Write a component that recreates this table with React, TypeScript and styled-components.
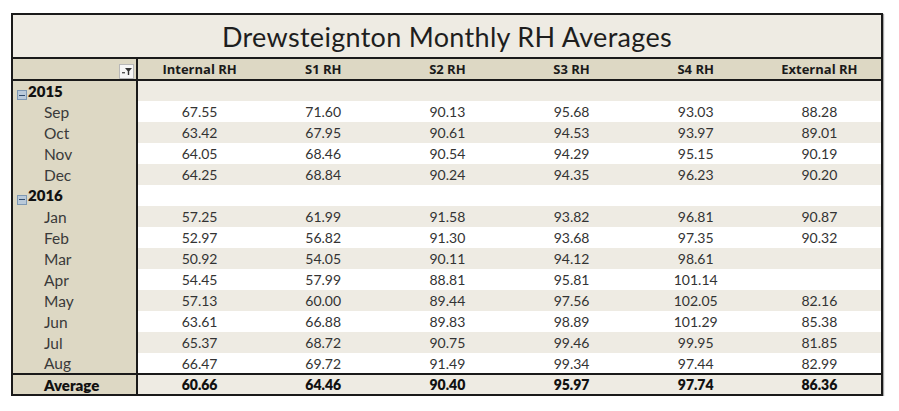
import React from 'react';
import styled, {createGlobalStyle} from "styled-components";

const GlobalStyle = createGlobalStyle`
  body {
    margin: 0;
    background: #ffffff;
    font-family: "Lato", "DejaVu Sans", sans-serif;
  }
`

type Row = { label: string; year?: boolean; values: string[] }

const rows: Row[] = [
    {label: "2015", year: true, values: ["", "", "", "", "", ""]},
    {label: "Sep", values: ["67.55", "71.60", "90.13", "95.68", "93.03", "88.28"]},
    {label: "Oct", values: ["63.42", "67.95", "90.61", "94.53", "93.97", "89.01"]},
    {label: "Nov", values: ["64.05", "68.46", "90.54", "94.29", "95.15", "90.19"]},
    {label: "Dec", values: ["64.25", "68.84", "90.24", "94.35", "96.23", "90.20"]},
    {label: "2016", year: true, values: ["", "", "", "", "", ""]},
    {label: "Jan", values: ["57.25", "61.99", "91.58", "93.82", "96.81", "90.87"]},
    {label: "Feb", values: ["52.97", "56.82", "91.30", "93.68", "97.35", "90.32"]},
    {label: "Mar", values: ["50.92", "54.05", "90.11", "94.12", "98.61", ""]},
    {label: "Apr", values: ["54.45", "57.99", "88.81", "95.81", "101.14", ""]},
    {label: "May", values: ["57.13", "60.00", "89.44", "97.56", "102.05", "82.16"]},
    {label: "Jun", values: ["63.61", "66.88", "89.83", "98.89", "101.29", "85.38"]},
    {label: "Jul", values: ["65.37", "68.72", "90.75", "99.46", "99.95", "81.85"]},
    {label: "Aug", values: ["66.47", "69.72", "91.49", "99.34", "97.44", "82.99"]},
]

const headers = ["Internal RH", "S1 RH", "S2 RH", "S3 RH", "S4 RH", "External RH"]
const averages = ["60.66", "64.46", "90.40", "95.97", "97.74", "86.36"]

export default function App() {
    return (
        <>
            <GlobalStyle/>
            <Page>
                <Table>
                    <colgroup>
                        <col style={{width: 125}}/>
                        {headers.map(h => <col key={h}/>)}
                    </colgroup>
                    <thead>
                    <tr>
                        <Title colSpan={7}>Drewsteignton Monthly RH Averages</Title>
                    </tr>
                    <tr>
                        <HeadCorner>
                            <FilterBox>
                                <svg width="12" height="10" viewBox="0 0 12 10">
                                    <path d="M4 2h7L8.2 5.2V9H6.8V5.2Z" fill="#333"/>
                                    <rect x="1" y="6" width="3" height="1.4" fill="#555"/>
                                </svg>
                            </FilterBox>
                        </HeadCorner>
                        {headers.map(h => <HeadCell key={h}>{h}</HeadCell>)}
                    </tr>
                    </thead>
                    <tbody>
                    {rows.map((r, i) => (
                        <BodyRow key={r.label} $shaded={i % 2 === 0}>
                            {r.year ? (
                                <YearLabel>
                                    <Collapse>
                                        <CollapseBar/>
                                    </Collapse>
                                    {r.label}
                                </YearLabel>
                            ) : (
                                <MonthLabel>{r.label}</MonthLabel>
                            )}
                            {r.values.map((v, j) => <Value key={j}>{v}</Value>)}
                        </BodyRow>
                    ))}
                    <AverageRow>
                        <AverageLabel>Average</AverageLabel>
                        {averages.map((v, j) => <AverageValue key={j}>{v}</AverageValue>)}
                    </AverageRow>
                    </tbody>
                </Table>
            </Page>
        </>
    );
}

const Page = styled.div`
  padding: 13px 0 0 11px;
`
const Table = styled.table`
  width: 872px;
  border-collapse: collapse;
  table-layout: fixed;
  border: 2px solid #1a1a1a;
  box-shadow: 1px 1px 1px rgba(0, 0, 0, 0.35);
  color: #2b2b2b;
`
const Title = styled.th`
  height: 42px;
  padding: 0;
  background: #eeebe3;
  font-family: "Lato", sans-serif;
  font-weight: 400;
  font-size: 27px;
  letter-spacing: 0.3px;
  color: #1e1e1e;
  text-align: center;
  border-bottom: 2px solid #1a1a1a;
`
const HeadCorner = styled.th`
  height: 20px;
  padding: 0 2px 0 0;
  background: #ddd8c4;
  text-align: right;
  border-right: 2px solid #1a1a1a;
  border-bottom: 2px solid #1a1a1a;
`
const FilterBox = styled.span`
  display: inline-flex;
  align-items: center;
  justify-content: center;
  width: 15px;
  height: 15px;
  background: #f6f6f6;
  border: 1px solid #b8b8b8;
  box-sizing: border-box;
  vertical-align: middle;
`
const HeadCell = styled.th`
  height: 20px;
  padding: 0;
  background: #ddd8c4;
  font-family: "Open Sans", sans-serif;
  font-weight: 700;
  font-size: 13px;
  color: #1a1a1a;
  text-align: center;
  border-bottom: 2px solid #1a1a1a;
`
const BodyRow = styled.tr<{ $shaded: boolean }>`
  height: 21px;
  background: ${p => p.$shaded ? "#eeebe3" : "#ffffff"};
`
const MonthLabel = styled.td`
  padding: 0 0 0 31px;
  background: #ddd8c4;
  font-size: 15.5px;
  color: #3a3a3a;
  border-right: 2px solid #1a1a1a;
`
const YearLabel = styled(MonthLabel)`
  padding-left: 4px;
  font-size: 15px;
  font-weight: 800;
  color: #111;
`
const Collapse = styled.span`
  display: inline-flex;
  align-items: center;
  justify-content: center;
  width: 8px;
  height: 8px;
  margin-right: 1px;
  background: #b9c9d9;
  border: 1px solid #7e98b3;
  vertical-align: 1px;
`
const CollapseBar = styled.span`
  width: 6px;
  height: 1px;
  background: #2f4a6a;
`
const Value = styled.td`
  padding: 0;
  font-size: 14px;
  color: #333;
  text-align: center;
`
const AverageRow = styled.tr`
  height: 21px;
  background: #eeebe3;
  border-top: 2px solid #1a1a1a;
`
const AverageLabel = styled(MonthLabel)`
  font-size: 15px;
  font-weight: 800;
  color: #111;
`
const AverageValue = styled(Value)`
  font-weight: 800;
  color: #111;
`
